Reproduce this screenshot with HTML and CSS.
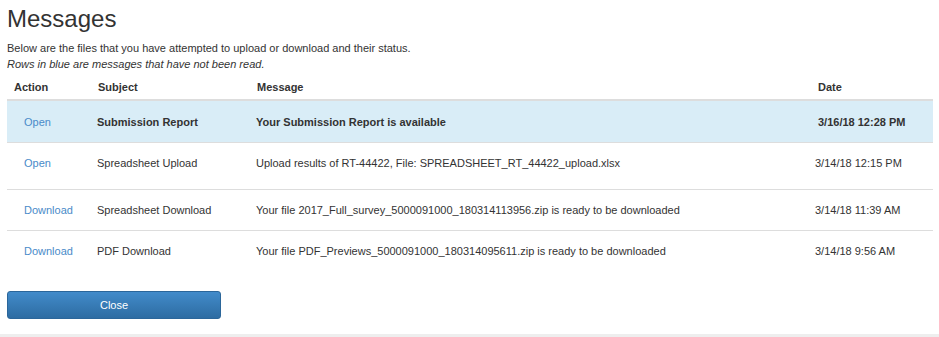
FILE: index.html
```html
<!DOCTYPE html>
<html lang="en">
<head>
    <meta charset="UTF-8">
    <meta name="viewport" content="width=device-width, initial-scale=1.0">
    <title>Messages</title>
    <link rel="stylesheet" href="styles.css">
</head>
<body>
    <div class="container">
        <h1>Messages</h1>
        <p class="intro">Below are the files that you have attempted to upload or download and their status.</p>
        <p class="intro note">Rows in blue are messages that have not been read.</p>

        <table class="messages">
            <colgroup>
                <col class="col-action">
                <col class="col-subject">
                <col class="col-message">
                <col class="col-date">
            </colgroup>
            <thead>
                <tr>
                    <th>Action</th>
                    <th>Subject</th>
                    <th>Message</th>
                    <th>Date</th>
                </tr>
            </thead>
            <tbody>
                <tr class="unread">
                    <td class="action"><a href="#">Open</a></td>
                    <td>Submission Report</td>
                    <td>Your Submission Report is available</td>
                    <td class="date">3/16/18 12:28 PM</td>
                </tr>
                <tr class="tall">
                    <td class="action"><a href="#">Open</a></td>
                    <td>Spreadsheet Upload</td>
                    <td>Upload results of RT-44422, File: SPREADSHEET_RT_44422_upload.xlsx</td>
                    <td class="date">3/14/18 12:15 PM</td>
                </tr>
                <tr>
                    <td class="action"><a href="#">Download</a></td>
                    <td>Spreadsheet Download</td>
                    <td>Your file 2017_Full_survey_5000091000_180314113956.zip is ready to be downloaded</td>
                    <td class="date">3/14/18 11:39 AM</td>
                </tr>
                <tr>
                    <td class="action"><a href="#">Download</a></td>
                    <td>PDF Download</td>
                    <td>Your file PDF_Previews_5000091000_180314095611.zip is ready to be downloaded</td>
                    <td class="date">3/14/18 9:56 AM</td>
                </tr>
            </tbody>
        </table>

        <button type="button" class="btn-close">Close</button>
    </div>
    <div class="footer"></div>
</body>
</html>
```

FILE: styles.css
```css
body {
    margin: 0;
    font-family: "Liberation Sans", Arial, sans-serif;
    font-size: 11px;
    line-height: 16px;
    color: #333333;
    background-color: #ffffff;
}

.container {
    padding: 6px 6px 15px 7px;
}

h1 {
    margin: 0 0 8px 0;
    font-size: 24px;
    font-weight: normal;
    line-height: 26px;
    color: #333333;
}

.intro {
    margin: 0;
}

.note {
    font-style: italic;
}

.messages {
    width: 926px;
    border-collapse: collapse;
    table-layout: fixed;
}

.col-action { width: 84px; }
.col-subject { width: 159px; }
.col-message { width: 561px; }
.col-date { width: 122px; }

.messages th {
    text-align: left;
    font-weight: bold;
    padding: 7px 7px 4px 7px;
    border-bottom: 2px solid #dddddd;
}

.messages td {
    padding: 12px 7px 12px 6px;
    border-bottom: 1px solid #dddddd;
    white-space: nowrap;
}

.messages tbody tr:last-child td {
    border-bottom: none;
}

.messages td.action {
    padding-left: 17px;
}

.messages td.date {
    padding-left: 4px;
}

.messages tr.unread td {
    padding-top: 13px;
    background-color: #d9edf7;
    font-weight: bold;
}

.messages tr.unread td.action {
    font-weight: normal;
}

.messages tr.unread td.date {
    padding-left: 7px;
}

.messages tr.tall td {
    padding-bottom: 18px;
}

.messages a {
    color: #4a8bc9;
    text-decoration: none;
}

.btn-close {
    display: block;
    margin-top: 20px;
    width: 214px;
    height: 28px;
    font-family: "Liberation Sans", Arial, sans-serif;
    font-size: 11px;
    color: #ffffff;
    background-image: linear-gradient(to bottom, #428bca 0%, #2d6ca2 100%);
    border: 1px solid #2b669a;
    border-radius: 3px;
    cursor: pointer;
}

.footer {
    border-top: 3px solid #eeeeee;
}
```
